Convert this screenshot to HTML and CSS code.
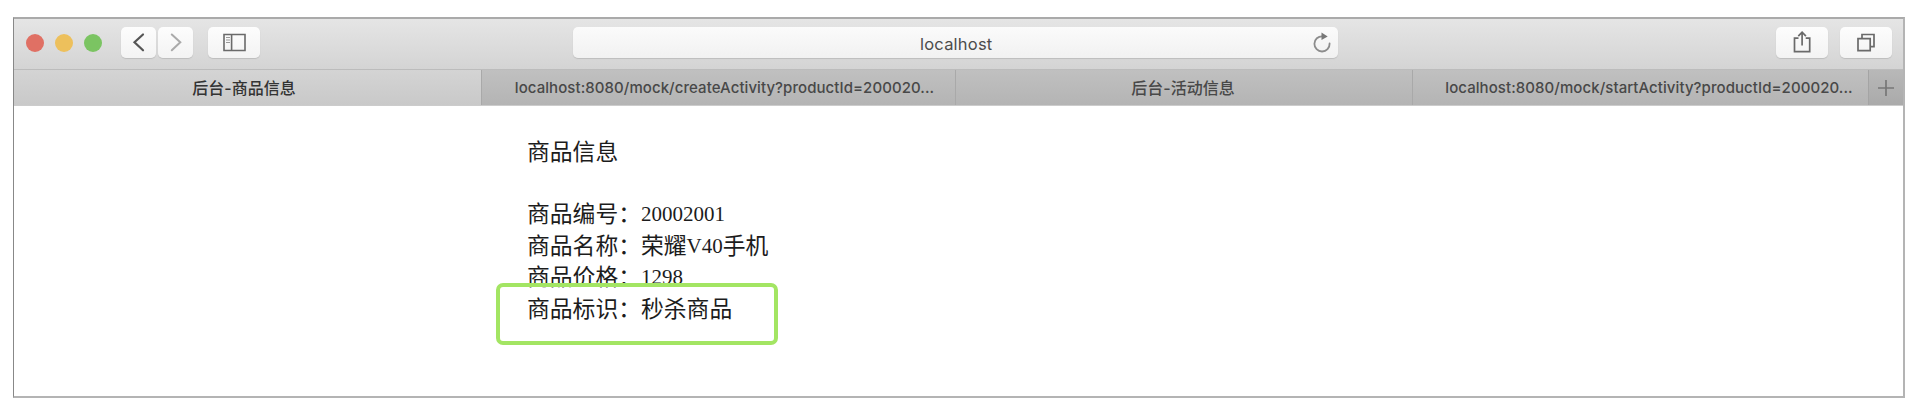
FILE: index.html
```html
<!DOCTYPE html>
<html lang="zh-CN">
<head>
<meta charset="utf-8">
<title>后台-商品信息</title>
<link rel="stylesheet" href="styles.css">
</head>
<body>
<div class="window">
  <header class="toolbar">
    <div class="lights"><i class="light red"></i><i class="light yellow"></i><i class="light green"></i></div>
    <div class="nav">
      <div class="btn"><svg width="35" height="30" viewBox="0 0 35 30" fill="none" stroke="#555" stroke-width="2.2"><path d="M22 7.5 13.500 15.300l8.500 8" stroke-linecap="round"/></svg></div>
      <div class="btn"><svg width="35" height="30" viewBox="0 0 35 30" fill="none" stroke="#aaa" stroke-width="2"><path d="M13.800 7.500 22.300 15.300l-8.500 8" stroke-linecap="round"/></svg></div>
    </div>
    <div class="btn wide"><svg width="52" height="30" viewBox="0 0 52 30" fill="none" stroke="#6a6a6a" stroke-width="1.600"><path d="M16 7.500h21v16h-21zM23.600 7.500v16"/><path d="M18 10.500h4M18 13h4M18 15.500h4" stroke="#999" stroke-width="1"/></svg></div>
    <div class="address">
      <span class="host">localhost</span>
      <svg class="reload" width="20" height="24" viewBox="0 0 20 24" fill="none"><path d="M10.500 5.300A7.600 7.600 0 1 0 17.600 12.500" stroke="#8c8c8c" stroke-width="1.800" stroke-linecap="round"/><path d="M9.500 1.500 15.700 5.500 9.500 9z" fill="#777"/></svg>
    </div>
    <div class="actions">
      <div class="btn wide"><svg width="52" height="30" viewBox="0 0 52 30" fill="none" stroke="#6a6a6a" stroke-width="1.700"><path d="M22.500 11.200h-4v13.500h15.200V11.200h-4M26.100 18.500V5.500M22.300 9.200l3.800-4 3.800 4"/></svg></div>
      <div class="btn wide"><svg width="52" height="30" viewBox="0 0 52 30" fill="none" stroke="#6a6a6a" stroke-width="1.700"><path d="M18 11.700h12.200v12H18z"/><path d="M22 11.700V7.500h12v12.200h-3.800"/></svg></div>
    </div>
  </header>
  <nav class="tabs">
    <div class="tab active"><span class="name">后台-商品信息</span></div>
    <div class="tab second"><span class="url">localhost:8080/mock/createActivity?productId=200020...</span></div>
    <div class="tab third"><span class="name">后台-活动信息</span></div>
    <div class="tab fourth"><span class="url">localhost:8080/mock/startActivity?productId=200020...</span></div>
    <div class="add"><svg width="18" height="18" viewBox="0 0 18 18" stroke="#777" stroke-width="1.700"><path d="M9 1v16M1 9h16"/></svg></div>
  </nav>
  <main class="content">
    <div class="row title">商品信息</div>
    <div class="row">商品编号：<span class="num">20002001</span></div>
    <div class="row">商品名称：荣耀<span class="num">V40</span>手机</div>
    <div class="row">商品价格：<span class="num">1298</span></div>
    <div class="row">商品标识：秒杀商品</div>
    <div class="highlight"></div>
  </main>
</div>
</body>
</html>
```
FILE: styles.css
```css
* { box-sizing: border-box; }
body {
  margin: 0;
  padding: 17px 15px 15px 13px;
  background: #fff;
  font-family: Inter, "Noto Sans CJK SC", sans-serif;
}
.window {
  width: 1892px;
  height: 381px;
  border: 1px solid #a0a0a0;
  border-left-color: #888;
  border-top: 2px solid #aaa;
  border-right: 2px solid #b4b4b4;
  border-bottom: 2px solid #b4b4b4;
}
.toolbar {
  display: flex;
  align-items: flex-start;
  height: 51px;
  padding: 8px 11px 0 12px;
  background: linear-gradient(#e5e5e5, #d4d4d4);
  border-bottom: 1px solid #bcbcbc;
}
.lights { display: flex; gap: 11px; padding-top: 7px; margin-right: 19px; }
.light { width: 18px; height: 18px; border-radius: 50%; }
.red { background: #e07064; }
.yellow { background: #edc05c; }
.green { background: #7bc462; }
.nav { display: flex; gap: 2px; margin-right: 15px; }
.btn {
  width: 35px;
  height: 31px;
  border-radius: 5px;
  background: linear-gradient(#fdfdfd, #f3f3f3);
  box-shadow: 0 1px 1px #bdbdbd;
}
.btn svg { display: block; }
.wide { width: 52px; }
.address {
  display: flex;
  align-items: center;
  width: 765px;
  height: 31px;
  margin-left: 313px;
  padding: 0 6px 0 347px;
  border-radius: 5px;
  background: linear-gradient(#fbfbfb, #f1f1f1);
  box-shadow: 0 1px 1px #bdbdbd;
}
.host { font-size: 16.5px; letter-spacing: 0.22px; color: #4c4c4c; line-height: 30px; padding-top: 2px; }
.reload { margin-left: auto; }
.actions { display: flex; gap: 12px; margin-left: auto; }
.tabs {
  display: flex;
  height: 36px;
  border-bottom: 1px solid #ccc;
  font-weight: 500;
  color: #484848;
}
.tab {
  display: flex;
  align-items: center;
  justify-content: center;
  background: linear-gradient(#c0c0c0, #b4b4b4);
  border-left: 1px solid #a9a9a9;
  white-space: nowrap;
}
.active {
  width: 467px;
  padding-right: 7px;
  border-left: 0;
  background: linear-gradient(#d4d4d4, #c9c9c9);
  color: #333;
}
.second { width: 474px; padding-left: 12px; }
.third { width: 457px; padding-right: 2px; }
.fourth { width: 456px; padding-left: 17px; }
.name { font-size: 16px; padding-bottom: 2px; }
.url { font-size: 15px; letter-spacing: 0.07px; }
.add {
  flex: 1;
  display: flex;
  align-items: center;
  justify-content: center;
  background: linear-gradient(#b8b8b8, #aaa);
  border-left: 1px solid #a4a4a4;
}
.content {
  position: relative;
  padding: 29px 0 0 513px;
  font-family: "Noto Sans CJK SC", sans-serif;
  font-size: 22.8px;
  line-height: 31.4px;
  color: #1c1c1c;
}
.row { height: 31.4px; white-space: nowrap; }
.title { margin-bottom: 31px; }
.num { font-family: "Liberation Serif", serif; font-size: 21px; line-height: 1; vertical-align: 1px; }
.highlight {
  position: absolute;
  left: 482px;
  top: 177px;
  width: 282px;
  height: 62px;
  border: 4px solid #a3e563;
  border-radius: 7px;
}
```
